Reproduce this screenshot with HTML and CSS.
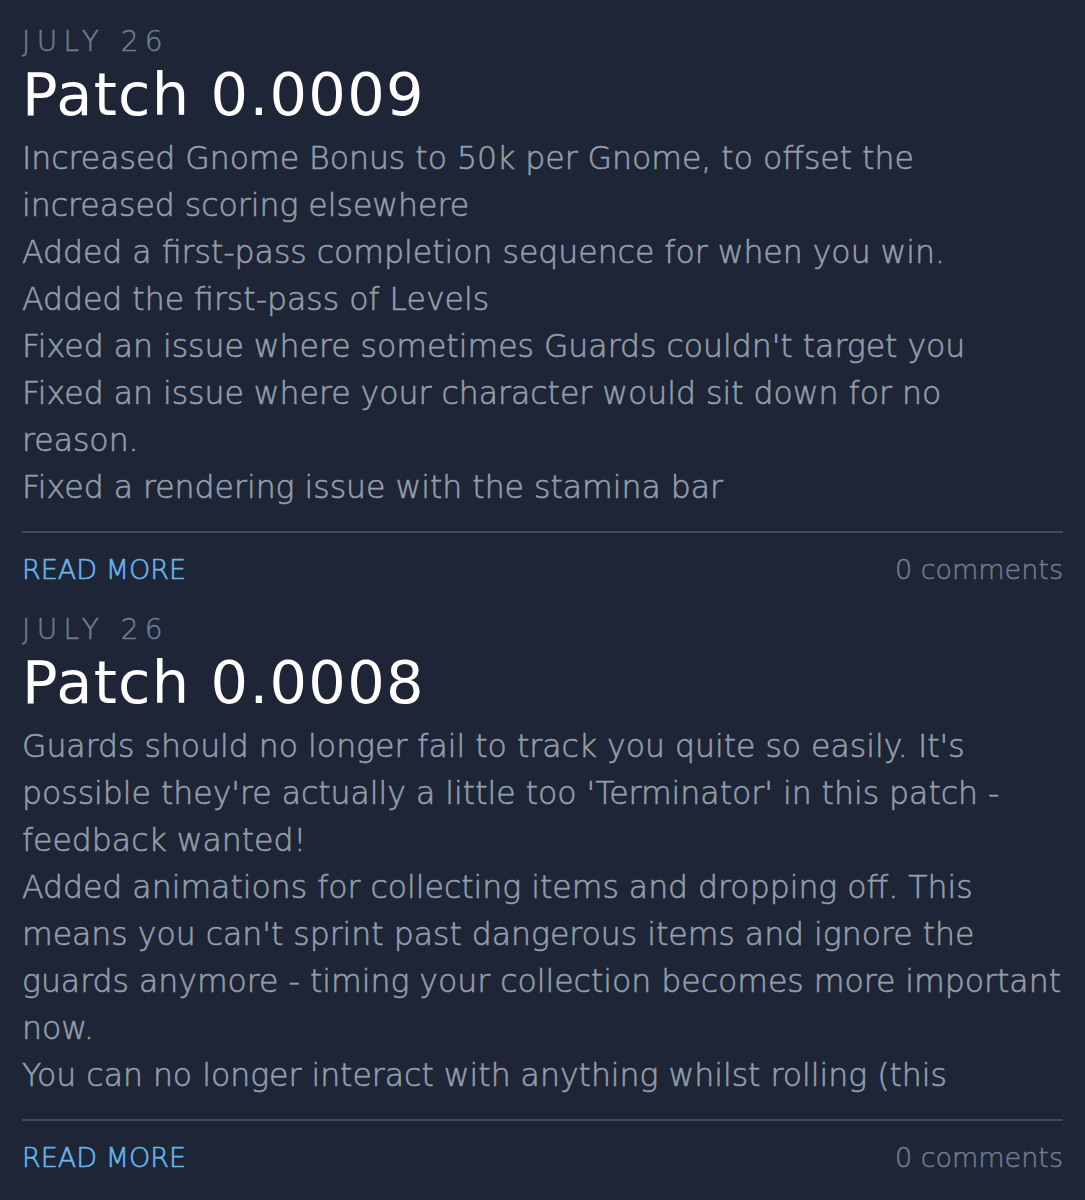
FILE: index.html
```html
<!DOCTYPE html>
<html lang="en">
<head>
<meta charset="utf-8">
<title>Patch notes</title>
<link rel="stylesheet" href="styles.css">
</head>
<body>
<main class="feed">
  <article class="post">
    <div class="post-date">JULY 26</div>
    <h2 class="post-title">Patch 0.0009</h2>
    <div class="post-body">
      <p>Increased Gnome Bonus to 50k per Gnome, to offset the<br>increased scoring elsewhere</p>
      <p>Added a first-pass completion sequence for when you win.</p>
      <p>Added the first-pass of Levels</p>
      <p>Fixed an issue where sometimes Guards couldn't target you</p>
      <p>Fixed an issue where your character would sit down for no<br>reason.</p>
      <p>Fixed a rendering issue with the stamina bar</p>
    </div>
    <footer class="post-footer">
      <a class="read-more" href="#">READ MORE</a>
      <span class="comments">0 comments</span>
    </footer>
  </article>
  <article class="post">
    <div class="post-date">JULY 26</div>
    <h2 class="post-title">Patch 0.0008</h2>
    <div class="post-body">
      <p>Guards should no longer fail to track you quite so easily. It's<br>possible they're actually a little too 'Terminator' in this patch -<br>feedback wanted!</p>
      <p>Added animations for collecting items and dropping off. This<br>means you can't sprint past dangerous items and ignore the<br>guards anymore - timing your collection becomes more important<br>now.</p>
      <p>You can no longer interact with anything whilst rolling (this</p>
    </div>
    <footer class="post-footer">
      <a class="read-more" href="#">READ MORE</a>
      <span class="comments">0 comments</span>
    </footer>
  </article>
</main>
</body>
</html>
```
FILE: styles.css
```css
html, body {
  margin: 0;
  padding: 0;
  background: #1d2536;
}

body {
  font-family: "DejaVu Sans", "Open Sans", sans-serif;
  -webkit-font-smoothing: antialiased;
}

.feed {
  padding: 26px 22px 0;
  display: flex;
  flex-direction: column;
  gap: 24px;
}

.post {
  display: flex;
  flex-direction: column;
}

.post-date {
  font-size: 28px;
  line-height: 32px;
  font-weight: 300;
  letter-spacing: 6.4px;
  color: #6d7d90;
  -webkit-text-stroke: 0.5px #6d7d90;
}

.post-title {
  margin: 0;
  font-size: 59px;
  line-height: 74px;
  font-weight: 400;
  letter-spacing: 1.3px;
  color: #ffffff;
}

.post-body {
  margin-top: 3px;
  max-height: 376px;
  overflow: hidden;
  font-size: 31.5px;
  line-height: 47px;
  font-weight: 300;
  color: #949daa;
  -webkit-text-stroke: 0.6px #949daa;
}

.post-body p {
  margin: 0;
  white-space: nowrap;
}

.post-footer {
  margin-top: 20px;
  border-top: 2px solid #3a4c64;
  padding-top: 17px;
  display: flex;
  justify-content: space-between;
  align-items: baseline;
  font-size: 27px;
  line-height: 40px;
  font-weight: 300;
}

.read-more {
  color: #67b4ea;
  text-decoration: none;
  -webkit-text-stroke: 0.6px #67b4ea;
}

.comments {
  color: #6f7c8e;
  -webkit-text-stroke: 0.5px #6f7c8e;
}
```
